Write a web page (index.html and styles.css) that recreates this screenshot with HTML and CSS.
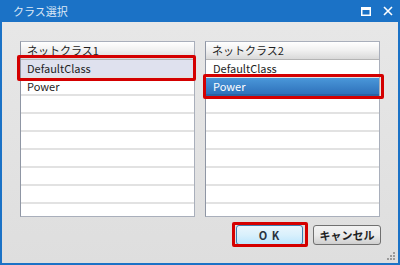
FILE: index.html
```html
<!DOCTYPE html>
<html>
<head>
<meta charset="utf-8">
<title>クラス選択</title>
<link rel="stylesheet" href="styles.css">
</head>
<body>
<div class="window">
  <div class="titlebar">
    <span class="title">クラス選択</span>
    <span class="ctrls">
      <svg width="10" height="9" viewBox="0 0 10 9"><rect x="0.75" y="0.75" width="8.5" height="7.5" fill="none" stroke="#fff" stroke-width="1.5"/><rect x="0" y="0" width="10" height="3" fill="#fff"/></svg>
      <svg width="10" height="10" viewBox="0 0 10 10"><path d="M1 1L9 9M9 1L1 9" stroke="#fff" stroke-width="1.6"/></svg>
    </span>
  </div>
  <div class="content">
    <div class="lists">
      <div class="list">
        <div class="head">ネットクラス1</div>
        <div class="row hot">DefaultClass</div>
        <div class="row">Power</div>
        <div class="row"></div>
        <div class="row"></div>
        <div class="row"></div>
        <div class="row"></div>
        <div class="row"></div>
        <div class="row"></div>
        <div class="row"></div>
      </div>
      <div class="list">
        <div class="head">ネットクラス2</div>
        <div class="row">DefaultClass</div>
        <div class="row sel">Power</div>
        <div class="row"></div>
        <div class="row"></div>
        <div class="row"></div>
        <div class="row"></div>
        <div class="row"></div>
        <div class="row"></div>
        <div class="row"></div>
      </div>
    </div>
    <div class="buttons">
      <button class="btn ok">O K</button>
      <button class="btn cancel">キャンセル</button>
    </div>
  </div>
  <!-- 赤枠の注記 -->
  <span class="mark m1"></span>
  <span class="mark m2"></span>
  <span class="mark m3"></span>
  <svg class="grip" width="8" height="8" viewBox="0 0 8 8" fill="#9a9a9a"><rect x="6" y="0" width="2" height="2"/><rect x="3" y="3" width="2" height="2"/><rect x="6" y="3" width="2" height="2"/><rect x="0" y="6" width="2" height="2"/><rect x="3" y="6" width="2" height="2"/><rect x="6" y="6" width="2" height="2"/></svg>
</div>
</body>
</html>
```

FILE: styles.css
```css
* { margin: 0; padding: 0; box-sizing: border-box; }
body { font-family: "Noto Sans CJK JP", "Noto Sans", sans-serif; font-size: 11px; color: #1e1e1e; }
.window { position: relative; width: 400px; height: 265px; border: 2px solid #1b72c6; border-top: 0; background: linear-gradient(#e8e8e8, #dedede); display: flex; flex-direction: column; }
.titlebar { height: 22px; margin: 0 -2px; background: #1b72c6; display: flex; align-items: center; justify-content: space-between; padding: 0 7px 0 13px; }
.title { color: #dce8f6; font-size: 11px; }
.ctrls { display: flex; gap: 12px; align-items: center; }
.content { flex: 1; padding: 19px 18px 0 18px; }
.lists { display: flex; gap: 10px; }
.list { flex: 1; height: 176px; background: #fff; border: 1px solid #a9afbb; border-left-color: #8f96a4; overflow: hidden; }
.head { height: 18px; line-height: 16px; padding-left: 6px; background: linear-gradient(#ffffff, #f0f0f0 50%, #d9d9d9); border-bottom: 1px solid #b4b4b4; font-size: 11px; }
.row { height: 18px; line-height: 16px; padding-left: 6px; border-bottom: 2px solid #e2e2e2; }
.list + .list .row { padding-left: 7px; }
.row.hot { background: #dfe1ee; }
.row.sel { background: linear-gradient(#4a97d9, #2f72bb); color: #fff; border-bottom-color: #2a62a3; }
.buttons { display: flex; justify-content: flex-end; gap: 10px; margin-top: 8px; margin-right: -1px; }
.btn { height: 20px; border-radius: 3px; font-family: inherit; font-size: 11px; color: #1e1e1e; }
.ok { width: 67px; border: 1px solid #3c7fb1; background: linear-gradient(#eaf6fd, #d9f0fc 50%, #bee6fd); letter-spacing: 1px; font-weight: bold; color: #2a3340; }
.cancel { width: 68px; border: 1px solid #707070; background: linear-gradient(#f2f2f2, #ebebeb 50%, #cfcfcf); font-weight: bold; }
.mark { position: absolute; border: 3px solid #d40000; border-radius: 2px; }
.m1 { left: 15px; top: 55px; width: 179px; height: 26px; }
.m2 { left: 201px; top: 74px; width: 181px; height: 25px; }
.m3 { left: 230px; top: 222px; width: 76px; height: 25px; }
.grip { position: absolute; right: 3px; bottom: 3px; }
```
